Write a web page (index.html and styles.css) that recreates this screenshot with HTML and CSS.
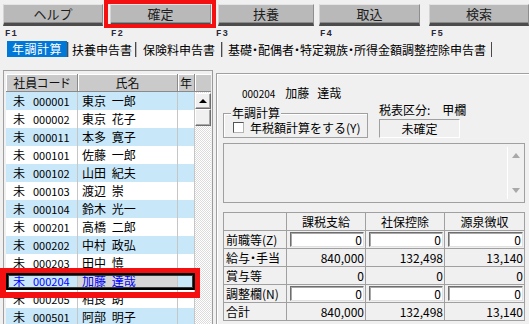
FILE: index.html
```html
<!DOCTYPE html>
<html lang="ja">
<head>
<meta charset="utf-8">
<title>年調計算</title>
<link rel="stylesheet" href="styles.css">
</head>
<body>
<div class="toolbar">
  <div class="btn b1">ヘルプ</div>
  <div class="btn b2">確定<span class="mark mark-btn"></span></div>
  <div class="btn b3">扶養</div>
  <div class="btn b4">取込</div>
  <div class="btn b5">検索</div>
</div>
<div class="fkeys">
  <span class="fk k1">F1</span><span class="fk k2">F2</span><span class="fk k3">F3</span><span class="fk k4">F4</span><span class="fk k5">F5</span>
</div>
<div class="tabs">
  <div class="tab active">年調計算</div>
  <div class="tab t2">扶養申告書</div>
  <div class="tab t3">保険料申告書</div>
  <div class="tab t4">基礎・配偶者・特定親族・所得金額調整控除申告書</div>
</div>
<div class="main">
  <div class="list">
    <div class="list-head">
      <div class="th">社員コード</div>
      <div class="th">氏名</div>
      <div class="th">年</div>
      <div class="th th-sb"></div>
    </div>
    <div class="list-body">
      <div class="rows">
        <div class="row alt"><div class="c code"><span>未</span><span class="num">000001</span></div><div class="c name">東京 一郎</div><div class="c yr"></div></div>
        <div class="row"><div class="c code"><span>未</span><span class="num">000002</span></div><div class="c name">東京 花子</div><div class="c yr"></div></div>
        <div class="row alt"><div class="c code"><span>未</span><span class="num">000011</span></div><div class="c name">本多 寛子</div><div class="c yr"></div></div>
        <div class="row"><div class="c code"><span>未</span><span class="num">000101</span></div><div class="c name">佐藤 一郎</div><div class="c yr"></div></div>
        <div class="row alt"><div class="c code"><span>未</span><span class="num">000102</span></div><div class="c name">山田 紀夫</div><div class="c yr"></div></div>
        <div class="row"><div class="c code"><span>未</span><span class="num">000103</span></div><div class="c name">渡辺 崇</div><div class="c yr"></div></div>
        <div class="row alt"><div class="c code"><span>未</span><span class="num">000104</span></div><div class="c name">鈴木 光一</div><div class="c yr"></div></div>
        <div class="row"><div class="c code"><span>未</span><span class="num">000201</span></div><div class="c name">高橋 二郎</div><div class="c yr"></div></div>
        <div class="row alt"><div class="c code"><span>未</span><span class="num">000202</span></div><div class="c name">中村 政弘</div><div class="c yr"></div></div>
        <div class="row"><div class="c code"><span>未</span><span class="num">000203</span></div><div class="c name">田中 慎</div><div class="c yr"></div></div>
        <div class="row alt sel"><div class="c code"><span>未</span><span class="num">000204</span></div><div class="c name">加藤 達哉</div><div class="c yr"></div><span class="focus"></span><span class="mark mark-row"></span></div>
        <div class="row"><div class="c code"><span>未</span><span class="num">000205</span></div><div class="c name">相良 朗</div><div class="c yr"></div></div>
        <div class="row alt"><div class="c code"><span>未</span><span class="num">000501</span></div><div class="c name">阿部 明子</div><div class="c yr"></div></div>
      </div>
      <div class="vscroll">
        <div class="sb-btn sb-up"></div>
        <div class="sb-btn sb-thumb"></div>
      </div>
    </div>
  </div>
  <div class="splitter"></div>
  <div class="panel">
    <div class="emp"><span class="emp-code">000204</span><span class="emp-n1">加藤</span><span class="emp-n2">達哉</span></div>
    <div class="info">
      <div class="group">
        <span class="legend">年調計算</span>
        <span class="check"></span>
        <span class="check-label">年税額計算をする(Y)</span>
      </div>
      <div class="tax">
        <div class="tax-kbn">税表区分:<span class="tax-val">甲欄</span></div>
        <div class="status">未確定</div>
      </div>
    </div>
    <div class="memo">
      <div class="memo-sb"><span class="arr up"></span><span class="arr down"></span></div>
    </div>
    <div class="grid">
      <div class="g hd"></div>
      <div class="g hd">課税支給</div>
      <div class="g hd">社保控除</div>
      <div class="g hd">源泉徴収</div>

      <div class="g lb">前職等(Z)</div>
      <div class="g"><div class="inp">0</div></div>
      <div class="g"><div class="inp">0</div></div>
      <div class="g"><div class="inp">0</div></div>

      <div class="g lb">給与・手当</div>
      <div class="g v">840,000</div>
      <div class="g v">132,498</div>
      <div class="g v">13,140</div>

      <div class="g lb">賞与等</div>
      <div class="g v">0</div>
      <div class="g v">0</div>
      <div class="g v">0</div>

      <div class="g lb">調整欄(N)</div>
      <div class="g"><div class="inp">0</div></div>
      <div class="g"><div class="inp">0</div></div>
      <div class="g"><div class="inp">0</div></div>

      <div class="g lb">合計</div>
      <div class="g v">840,000</div>
      <div class="g v">132,498</div>
      <div class="g v">13,140</div>
    </div>
  </div>
</div>
</body>
</html>
```

FILE: styles.css
```css
* {
  box-sizing: border-box;
  margin: 0;
  padding: 0;
}

body {
  margin: 0;
  width: 529px;
  height: 324px;
  overflow: hidden;
  background: #f0f0f0;
  font-family: "Noto Sans CJK JP", "Noto Sans", sans-serif;
  font-size: 12px;
  color: #000;
}

/* ---------- toolbar ---------- */
.toolbar {
  display: flex;
  height: 26px;
  padding: 4px 0 0 3px;
}

.btn {
  position: relative;
  height: 22px;
  background: #b9b9b9;
  border-top: 1px solid #e4e4e4;
  border-left: 1px solid #d4d4d4;
  border-right: 1px solid #8e8e8e;
  border-bottom: 3px solid #4c4c4c;
  box-shadow: inset 0 -1px 0 #8a8a8a;
  text-align: center;
  line-height: 18px;
  font-size: 13px;
  color: #1e1e1e;
}

.b1 { width: 100px; }
.b2 { width: 101px; margin-left: 7px; }
.b3 { width: 96px; margin-left: 7px; }
.b4 { width: 101px; margin-left: 5px; }
.b5 { width: 100px; margin-left: 9px; }

.mark {
  position: absolute;
  border: 4px solid #f41010;
  z-index: 3;
}

.mark-btn {
  left: -7px;
  right: -6px;
  top: -5px;
  bottom: -5px;
}

/* ---------- function keys ---------- */
.fkeys {
  display: flex;
  height: 14px;
  padding: 3px 0 0 5px;
  font-family: "Liberation Mono", "DejaVu Sans Mono", monospace;
  font-weight: bold;
  font-size: 9px;
  line-height: 11px;
  letter-spacing: 1px;
  color: #2a2a3a;
}

.k1 { width: 106px; }
.k2 { width: 105px; }
.k3 { width: 104px; }
.k4 { width: 111px; }

/* ---------- tabs ---------- */
.tabs {
  display: flex;
  align-items: flex-start;
  height: 18px;
  padding-left: 7px;
  font-size: 12px;
  font-feature-settings: "palt";
}

.tab {
  margin-top: 2px;
  height: 15px;
  line-height: 15px;
  border-left: 1px solid #4a4a4a;
  box-shadow: inset 1px 0 0 #b8b8b8;
  color: #000;
  white-space: nowrap;
}

.tab.active {
  width: 60px;
  margin-top: 1px;
  height: 16px;
  line-height: 16px;
  border-left: none;
  box-shadow: none;
  background: #0078d7;
  color: #fff;
  text-align: center;
  letter-spacing: 0.5px;
}

.t2 { width: 68px; padding-left: 4px; }
.t3 { width: 86px; padding-left: 7px; }
.t4 { width: 271px; padding-left: 6px; border-right: 1px solid #4a4a4a; }

/* ---------- main ---------- */
.main {
  display: flex;
  align-items: flex-start;
  margin-top: 12px;
}

.list {
  width: 209px;
  margin-left: 3px;
  padding: 3px 0 0 2px;
  border-top: 1px solid #a0a0a0;
  border-left: 1px solid #a0a0a0;
}

.list-head {
  display: grid;
  grid-template-columns: 72px 100px 17px 16px;
  height: 18px;
}

.th {
  background: #cacaca;
  border-right: 1px solid #8a8a8a;
  border-bottom: 1px solid #8a8a8a;
  box-shadow: inset 1px 1px 0 #fff;
  text-align: center;
  line-height: 17px;
  font-size: 12px;
  font-feature-settings: "palt";
  color: #111;
}

.th-sb {
  border-right: none;
}

.list-body {
  display: flex;
}

.rows {
  width: 189px;
}

.row {
  position: relative;
  display: grid;
  grid-template-columns: 72px 100px 17px;
  height: 18px;
  line-height: 18px;
  background: #fff;
}

.row.alt {
  background: #c8e7f9;
}

.c {
  border-right: 1px solid #c6c6c6;
  white-space: nowrap;
  overflow: hidden;
}

.code {
  padding-left: 7px;
}

.num {
  margin-left: 8px;
  font-size: 11px;
}

.name {
  padding-left: 4px;
  word-spacing: 3px;
}

.row.sel {
  color: #0000ff;
}

.row.sel .name {
  background: #d6d6d6;
}

.focus {
  position: absolute;
  left: 0;
  top: 1px;
  right: 0;
  bottom: 0;
  border: 2px solid #000;
  box-shadow: inset 0 0 0 1px #3a3a3a;
  z-index: 2;
}

.mark-row {
  left: -6px;
  right: -5px;
  top: -4px;
  bottom: -8px;
  border-width: 5px 5px 6px 6px;
}

.vscroll {
  width: 16px;
  height: 240px;
  background-color: #fff;
  background-image: repeating-conic-gradient(#dcdcdc 0 25%, #fff 0 50%);
  background-size: 2px 2px;
}

.sb-btn {
  position: relative;
  height: 16px;
  background: #f0f0f0;
  border: 1px solid;
  border-color: #fff #6e6e6e #6e6e6e #fff;
  box-shadow: inset -1px -1px 0 #a8a8a8;
}

.sb-up {
  margin-top: 1px;
}

.sb-up::after {
  content: "";
  position: absolute;
  left: 3px;
  top: 5px;
  border-left: 4px solid transparent;
  border-right: 4px solid transparent;
  border-bottom: 4px solid #000;
}

.sb-thumb {
  height: 17px;
}

.splitter {
  width: 4px;
  height: 260px;
  border-left: 1px solid #9a9a9a;
}

/* ---------- right panel ---------- */
.panel {
  flex: 1;
  height: 260px;
  margin-top: 3px;
  padding: 12px 0 0 6px;
  border-top: 1px solid #a0a0a0;
  border-left: 1px solid #a0a0a0;
  box-shadow: inset 1px 1px 0 #fff;
}

.emp {
  height: 14px;
  line-height: 14px;
  padding-left: 19px;
  white-space: nowrap;
}

.emp-code {
  font-size: 10px;
}

.emp-n1 {
  margin-left: 10px;
}

.emp-n2 {
  margin-left: 8px;
}

.info {
  display: flex;
  height: 35px;
  margin-top: 3px;
}

.group {
  position: relative;
  display: flex;
  align-items: center;
  width: 145px;
  height: 25px;
  margin-top: 10px;
  padding: 4px 0 0 9px;
  border: 1px solid #a0a0a0;
  box-shadow: inset 1px 1px 0 #fff;
}

.legend {
  position: absolute;
  left: 7px;
  top: -7px;
  padding: 0 1px;
  background: #f0f0f0;
  line-height: 12px;
}

.check {
  width: 11px;
  height: 11px;
  background: #fff;
  border: 1px solid;
  border-color: #555 #b4b4b4 #b4b4b4 #555;
}

.check-label {
  margin-left: 6px;
  line-height: 13px;
  white-space: nowrap;
}

.tax {
  margin-left: 11px;
}

.tax-kbn {
  height: 14px;
  line-height: 14px;
  white-space: nowrap;
}

.tax-val {
  margin-left: 12px;
}

.status {
  width: 81px;
  height: 19px;
  margin-top: 2px;
  border: 1px solid;
  border-color: #a0a0a0 #fff #fff #a0a0a0;
  text-align: center;
  line-height: 17px;
}

.memo {
  display: flex;
  justify-content: flex-end;
  width: 302px;
  height: 60px;
  margin-top: 5px;
  border: 1px solid #a0a0a0;
}

.memo-sb {
  display: flex;
  flex-direction: column;
  justify-content: space-between;
  align-items: center;
  width: 17px;
  margin: 3px 0;
  padding: 6px 0 6px;
  border-left: 1px solid #fff;
}

.arr {
  display: block;
  border-left: 4px solid transparent;
  border-right: 4px solid transparent;
}

.arr.up {
  border-bottom: 5px solid #a8a8a8;
}

.arr.down {
  border-top: 5px solid #a8a8a8;
}

.grid {
  display: grid;
  grid-template-columns: 63px 79px 79px 80px;
  width: 302px;
  margin-top: 9px;
  border-top: 1px solid #a0a0a0;
  border-left: 1px solid #a0a0a0;
}

.g {
  height: 18px;
  line-height: 17px;
  border-right: 1px solid #a0a0a0;
  border-bottom: 1px solid #a0a0a0;
  white-space: nowrap;
}

.hd {
  text-align: center;
}

.lb {
  padding-left: 2px;
  font-feature-settings: "palt";
}

.v {
  text-align: right;
  padding-right: 1px;
}

.inp {
  height: 15px;
  margin: 1px 1px 0 3px;
  padding-right: 1px;
  background: #fff;
  border: 1px solid;
  border-color: #6e6e6e #e0e0e0 #e0e0e0 #6e6e6e;
  box-shadow: inset 1px 1px 0 #a8a8a8;
  text-align: right;
  line-height: 13px;
}
```
